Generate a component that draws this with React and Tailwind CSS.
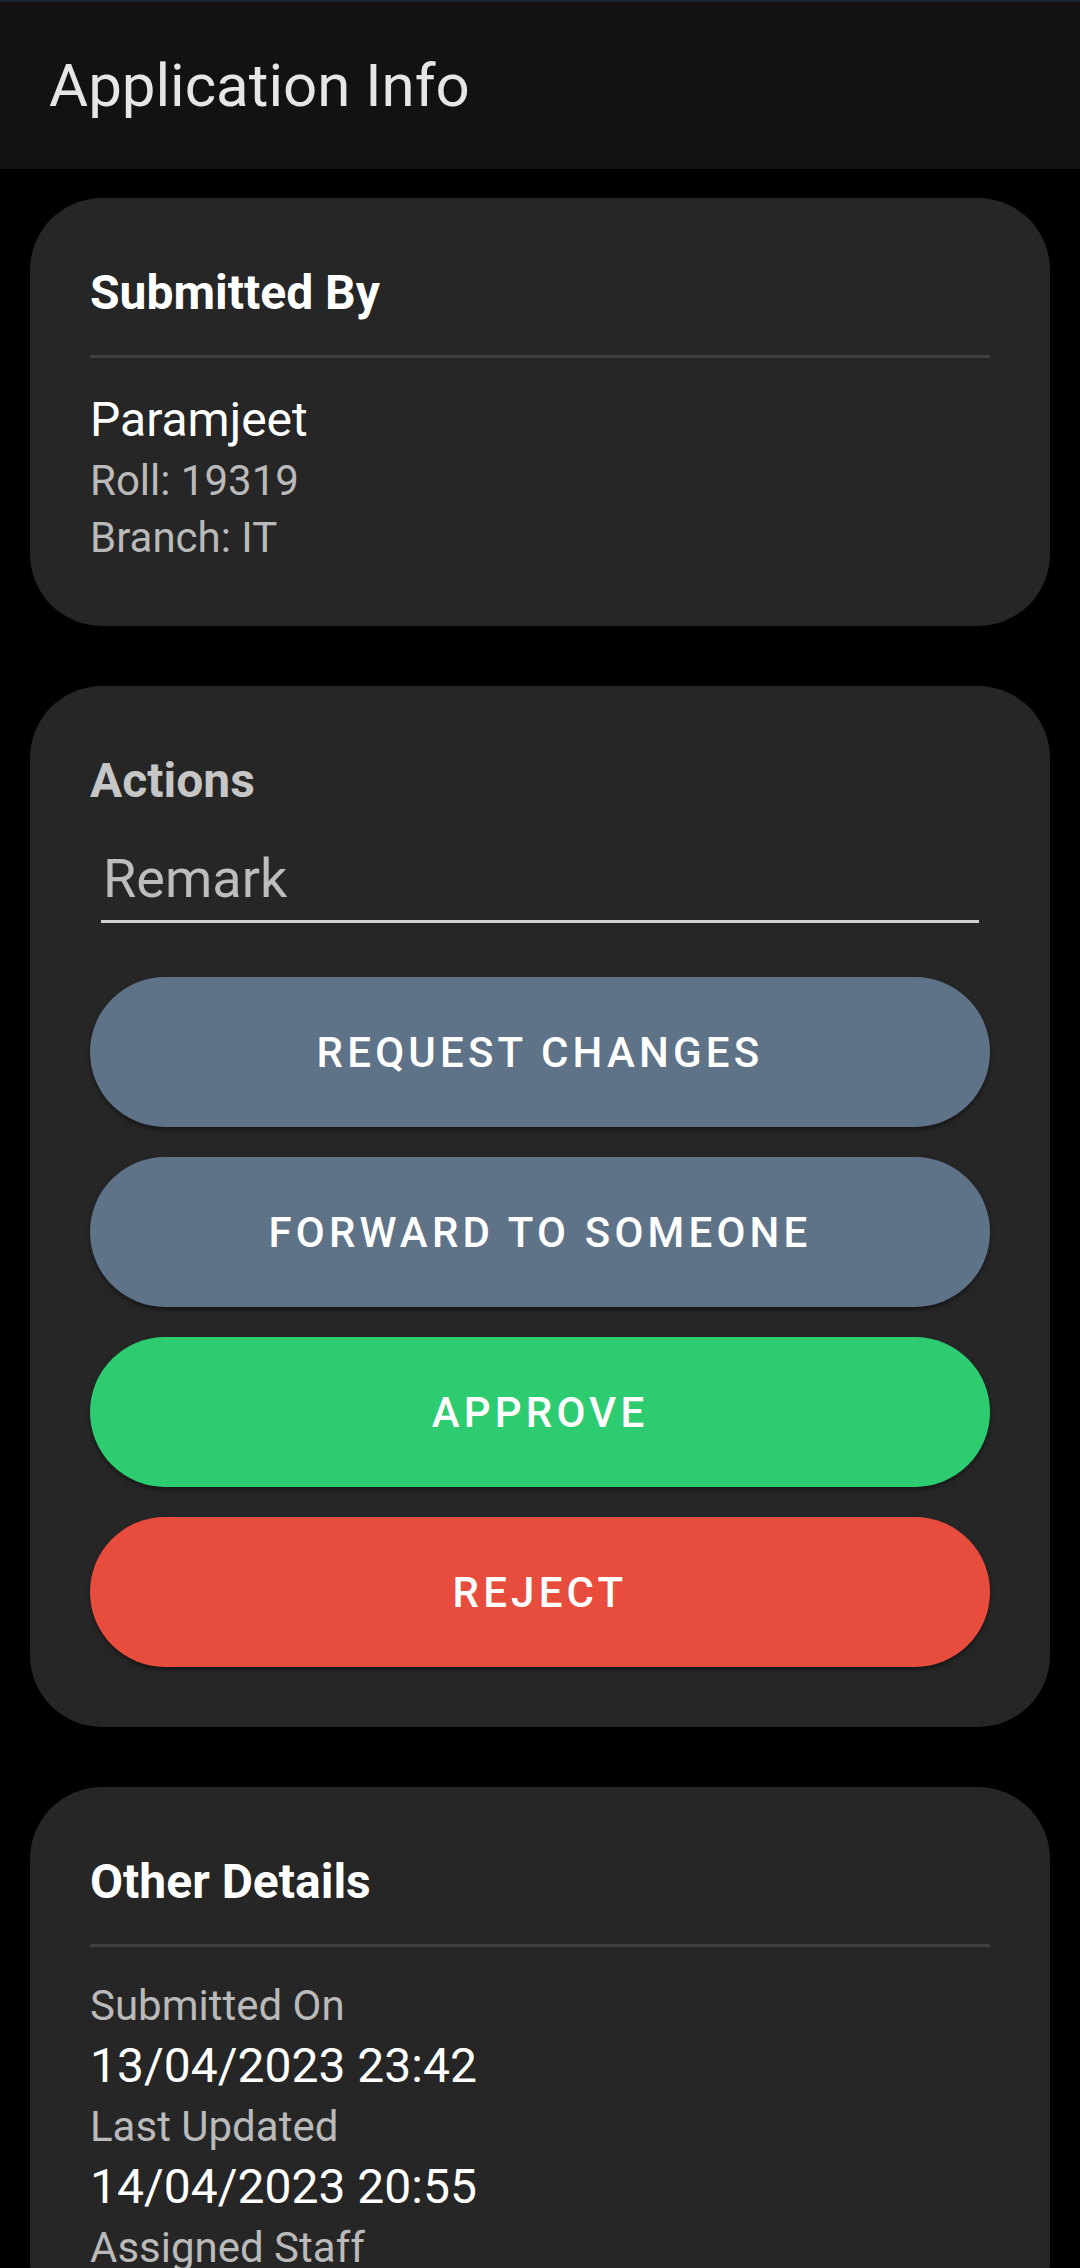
export default function App() {
  const actions = [
    { label: 'REQUEST CHANGES', cls: 'bg-[#5f7388]' },
    { label: 'FORWARD TO SOMEONE', cls: 'bg-[#5f7388]' },
    { label: 'APPROVE', cls: 'bg-[#2ecc71]' },
    { label: 'REJECT', cls: 'bg-[#e74c3c]' },
  ];

  const details = [
    { label: 'Submitted On', value: '13/04/2023 23:42' },
    { label: 'Last Updated', value: '14/04/2023 20:55' },
    { label: 'Assigned Staff', value: '' },
  ];

  return (
    <div className="min-h-screen bg-black font-['Roboto',sans-serif]">
      <header className="h-[169px] bg-[#121212] border-t-2 border-[#1b2530] flex items-center px-[49px]">
        <h1 className="text-[60px] leading-[80px] text-[#e6e6e6]">Application Info</h1>
      </header>

      <main className="px-[30px] pt-[29px] pb-[60px] flex flex-col gap-[60px]">
        {/* submitted by */}
        <section className="bg-[#262626] rounded-[72px] px-[60px] pt-[63px] pb-[60px]">
          <h2 className="text-[48px] leading-[64px] font-bold text-white">Submitted By</h2>
          <div className="mt-[30px] h-[3px] bg-[#404040]" />
          <div className="mt-[30px]">
            <p className="text-[48px] leading-[64px] text-white">Paramjeet</p>
            <p className="text-[42px] leading-[57px] text-[#bababa]">Roll: 19319</p>
            <p className="text-[42px] leading-[57px] text-[#bababa]">Branch: IT</p>
          </div>
        </section>

        {/* actions */}
        <section className="bg-[#262626] rounded-[72px] px-[60px] pt-[63px] pb-[60px]">
          <h2 className="text-[48px] leading-[64px] font-bold text-[#c6c6c6]">Actions</h2>
          <div className="mt-[29px] px-[11px]">
            <input
              type="text"
              placeholder="Remark"
              className="w-full h-[81px] bg-transparent border-b-[3px] border-[#d0d0d0] pb-[6px] pl-[2px] text-[54px] text-white placeholder:text-[#bdbdbd] outline-none"
            />
          </div>
          <div className="mt-[54px] flex flex-col gap-[30px]">
            {actions.map(a => (
              <button
                key={a.label}
                className={`h-[150px] w-full rounded-full ${a.cls} text-white text-[42px] font-medium tracking-[0.1em] shadow-[0_3px_4px_rgba(0,0,0,0.4)]`}
              >
                {a.label}
              </button>
            ))}
          </div>
        </section>

        {/* other details */}
        <section className="bg-[#262626] rounded-[72px] px-[60px] pt-[63px] pb-[60px]">
          <h2 className="text-[48px] leading-[64px] font-bold text-white">Other Details</h2>
          <div className="mt-[30px] h-[3px] bg-[#404040]" />
          <div className="mt-[30px]">
            {details.map(d => (
              <div key={d.label}>
                <p className="text-[42px] leading-[57px] text-[#bababa]">{d.label}</p>
                {d.value && <p className="text-[48px] leading-[64px] text-white">{d.value}</p>}
              </div>
            ))}
          </div>
        </section>
      </main>
    </div>
  );
}
